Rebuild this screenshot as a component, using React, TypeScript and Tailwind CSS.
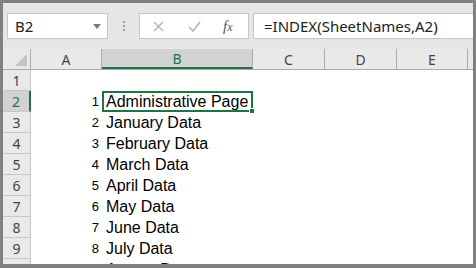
import React from "react";

const columns = [
  { label: "A", width: "w-[71px]" },
  { label: "B", width: "w-[151px]", selected: true },
  { label: "C", width: "w-[72px]" },
  { label: "D", width: "w-[72px]" },
  { label: "E", width: "w-[71px]" },
];

const rows: { n: number; idx?: number; text?: string }[] = [
  { n: 1 },
  { n: 2, idx: 1, text: "Administrative Page" },
  { n: 3, idx: 2, text: "January Data" },
  { n: 4, idx: 3, text: "February Data" },
  { n: 5, idx: 4, text: "March Data" },
  { n: 6, idx: 5, text: "April Data" },
  { n: 7, idx: 6, text: "May Data" },
  { n: 8, idx: 7, text: "June Data" },
  { n: 9, idx: 8, text: "July Data" },
  { n: 10, idx: 9, text: "August Data" },
];

function FormulaBar() {
  return (
    <div className="flex h-[46px] shrink-0 items-start bg-[#e6e6e6] pt-[10px] pl-[4px] font-['Noto_Sans',sans-serif]">
      <div className="flex h-[26px] w-[101px] items-center justify-between border border-[#c6c6c6] bg-white pl-[7px] pr-[6px]">
        <span className="text-[15px] text-[#222]">B2</span>
        <svg width="8" height="5" viewBox="0 0 8 5">
          <path d="M0 0 L8 0 L4 5 Z" fill="#7a7a7a" />
        </svg>
      </div>
      <div className="flex h-[26px] w-[31px] flex-col items-center justify-center gap-[2px]">
        <span className="h-[2px] w-[2px] bg-[#a0a0a0]" />
        <span className="h-[2px] w-[2px] bg-[#a0a0a0]" />
        <span className="h-[2px] w-[2px] bg-[#a0a0a0]" />
      </div>
      <div className="flex h-[26px] w-[110px] items-center border border-[#c6c6c6] bg-white">
        <svg className="ml-[13px]" width="11" height="11" viewBox="0 0 11 11">
          <path d="M1 1 L10 10 M10 1 L1 10" stroke="#b4b4b4" strokeWidth="1.4" />
        </svg>
        <svg className="ml-[24px]" width="13" height="11" viewBox="0 0 13 11">
          <path d="M1 6 L5 10 L12 1" stroke="#b4b4b4" strokeWidth="1.6" fill="none" />
        </svg>
        <span className="ml-[22px] font-['Liberation_Serif',serif] text-[15px] italic text-[#555]">
          f<span className="text-[12px]">x</span>
        </span>
      </div>
      <div className="ml-[4px] flex h-[26px] flex-1 items-center border border-r-0 border-[#c6c6c6] bg-white pl-[10px]">
        <span className="text-[15px] text-[#222]">=INDEX(SheetNames,A2)</span>
      </div>
    </div>
  );
}

function HeaderRow() {
  return (
    <div className="flex h-[21px] shrink-0 border-b border-[#ababab] bg-[#e9e9e9] font-['Noto_Sans',sans-serif] text-[14px]">
      <div className="relative w-[28px] shrink-0 border-r border-[#ababab]">
        <svg className="absolute right-[3px] bottom-[3px]" width="12" height="12" viewBox="0 0 12 12">
          <path d="M12 0 L12 12 L0 12 Z" fill="#c4c4c4" />
        </svg>
      </div>
      {columns.map((c) => (
        <div
          key={c.label}
          className={
            c.selected
              ? `${c.width} flex shrink-0 items-center justify-center border-r border-[#ababab] border-b-2 border-b-[#217346] bg-[#d2d2d2] text-[#217346]`
              : `${c.width} flex shrink-0 items-center justify-center border-r border-[#ababab] text-[#444]`
          }
        >
          {c.label}
        </div>
      ))}
      <div className="flex-1" />
    </div>
  );
}

function GridRow({ n, idx, text }: { n: number; idx?: number; text?: string }) {
  const selected = n === 2;
  return (
    <div className="flex h-[21px] shrink-0">
      <div
        className={
          selected
            ? "flex w-[28px] shrink-0 items-center justify-center border-r-2 border-b border-r-[#217346] border-b-[#c8c8c8] bg-[#d2d2d2] font-['Noto_Sans',sans-serif] text-[14px] text-[#217346]"
            : "flex w-[28px] shrink-0 items-center justify-center border-r border-b border-[#c8c8c8] bg-[#e9e9e9] font-['Noto_Sans',sans-serif] text-[14px] text-[#444]"
        }
      >
        {n}
      </div>
      <div className="flex w-[71px] shrink-0 items-center justify-end pr-[3px] font-['Liberation_Sans',sans-serif] text-[13px] text-black">
        {idx}
      </div>
      <div
        className={
          selected
            ? "relative flex w-[151px] shrink-0 items-center border-2 border-[#217346] pl-[2px] font-['Liberation_Sans',sans-serif] text-[16px] text-black"
            : "flex w-[151px] shrink-0 items-center pl-[4px] font-['Liberation_Sans',sans-serif] text-[16px] text-black"
        }
      >
        {text}
        {selected ? (
          <span className="absolute right-[-4px] bottom-[-4px] h-[6px] w-[6px] border border-white bg-[#217346]" />
        ) : null}
      </div>
      <div className="flex-1" />
    </div>
  );
}

export default function App() {
  return (
    <div className="h-[268px] w-[476px] overflow-hidden bg-[#808080] pt-[3px] pr-[3px] pb-[4px] pl-[3px]">
      <div className="flex h-full flex-col overflow-hidden bg-white">
        <FormulaBar />
        <HeaderRow />
        {rows.map((r) => (
          <GridRow key={r.n} {...r} />
        ))}
      </div>
    </div>
  );
}
